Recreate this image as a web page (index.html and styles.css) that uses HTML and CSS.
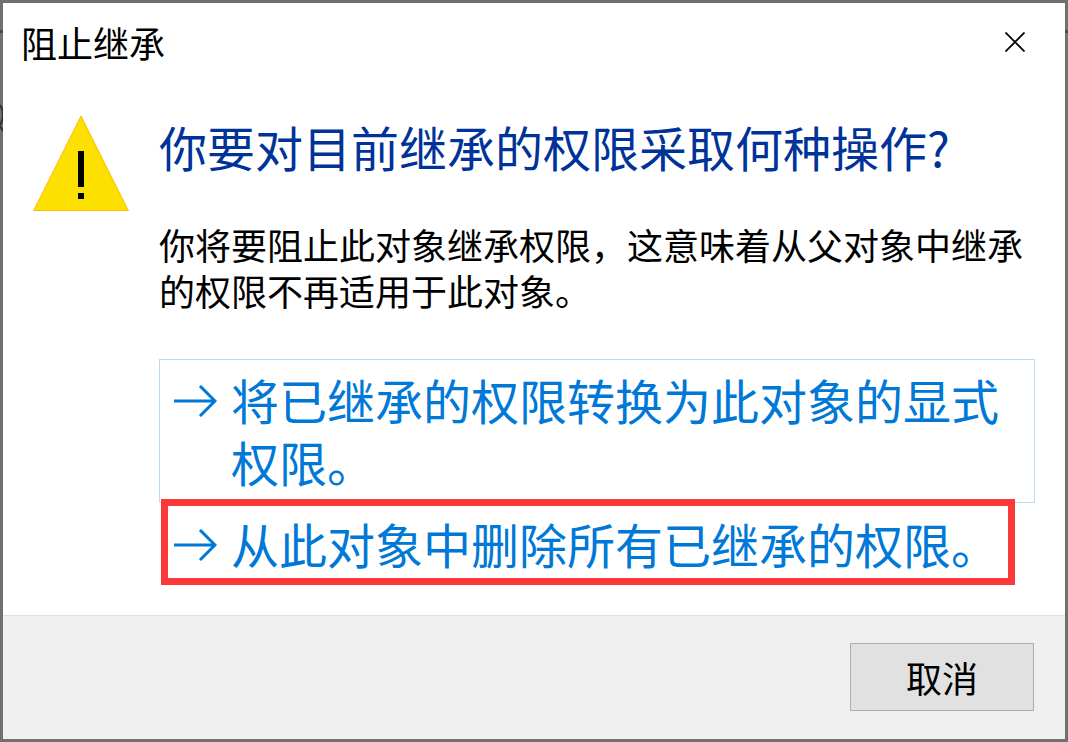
FILE: index.html
```html
<!DOCTYPE html>
<html lang="zh-CN">
<head>
<meta charset="utf-8">
<meta name="viewport" content="width=device-width, initial-scale=1">
<title>阻止继承</title>
<link rel="stylesheet" href="styles.css">
</head>
<body>
<svg class="backdrop backdrop-left" viewBox="0 0 3 140" aria-hidden="true"><path d="M0 31.5H3" stroke="#4b4b4b" stroke-width="3"/><path d="M0 105Q3 109 3 115Q3 121 0 125M0 126L3 131" fill="none" stroke="#303030" stroke-width="2"/></svg>
<svg class="backdrop backdrop-right" viewBox="0 0 3 140" aria-hidden="true"><path d="M0 31.5H3" stroke="#4b4b4b" stroke-width="3"/></svg>
<div class="dialog" role="dialog" aria-labelledby="dialog-title">
  <header class="titlebar">
    <span id="dialog-title">阻止继承</span>
    <button class="close" type="button" aria-label="关闭">
      <svg viewBox="0 0 20 20" aria-hidden="true"><path d="M.5 .5L19.5 19.5M19.5 .5L.5 19.5" stroke="#000" stroke-width="1.8"/></svg>
    </button>
  </header>
  <main class="content">
    <svg class="warning" viewBox="0 0 96 97" role="img" aria-label="警告"><path d="M48 1L95.3 95.5H.7Z" fill="#fce100" stroke="#ffb900"/><path d="M45 36h6v36h-6zM45 78h6v6h-6z"/></svg>
    <div class="message">
      <h1 class="heading">你要对目前继承的权限采取何种操作?</h1>
      <p class="description">你将要阻止此对象继承权限，这意味着从父对象中继承的权限不再适用于此对象。</p>
      <div class="options">
        <button class="option option-default" type="button">
          <svg class="arrow" viewBox="0 0 43 32" aria-hidden="true"><path d="M0 16H41M26 1L41 16L26 31" fill="none" stroke="#0078d7" stroke-width="3"/></svg>
          <span>将已继承的权限转换为此对象的显式权限。</span>
        </button>
        <div class="marked">
          <button class="option" type="button">
            <svg class="arrow" viewBox="0 0 43 32" aria-hidden="true"><path d="M0 16H41M26 1L41 16L26 31" fill="none" stroke="#0078d7" stroke-width="3"/></svg>
            <span>从此对象中删除所有已继承的权限。</span>
          </button>
        </div>
      </div>
    </div>
  </main>
  <footer class="footer">
    <button class="cancel" type="button">取消</button>
  </footer>
</div>
</body>
</html>
```
FILE: styles.css
```css
* {
  box-sizing: border-box;
}

body {
  margin: 0;
  position: relative;
  font-family: "Noto Sans CJK SC", sans-serif;
  font-size: 36px;
  font-weight: 400;
  line-height: 46px;
  color: #000;
}

button {
  font: inherit;
  color: inherit;
  margin: 0;
  padding: 0;
  border: 0;
  background: none;
}

svg {
  display: block;
  flex: none;
}

.backdrop {
  position: absolute;
  z-index: 1;
  top: 0;
  width: 3px;
  height: 140px;
}

.backdrop-left {
  left: 0;
}

.backdrop-right {
  right: 0;
}

.dialog {
  display: flex;
  flex-direction: column;
  min-height: 100vh;
  border: 3px solid #707070;
  background: #fff;
}

.titlebar {
  display: flex;
  align-items: center;
  justify-content: space-between;
  height: 78px;
  padding: 0 30px 0 18px;
}

.close {
  padding: 10px;
}

.close svg {
  width: 20px;
  height: 20px;
}

.content {
  flex: 1;
  display: flex;
  align-items: flex-start;
  gap: 30px;
  padding: 34px 30px 30px;
}

.warning {
  width: 96px;
  height: 97px;
}

.message {
  flex: 1;
}

.heading {
  margin: 0 0 44px;
  font-size: 48px;
  font-weight: 400;
  line-height: 62px;
  color: #003399;
}

.description {
  margin: 0 0 46px;
}

.option {
  display: flex;
  align-items: flex-start;
  gap: 14px;
  width: 100%;
  padding: 8px 14px 10px;
  border: 1px solid transparent;
  font-size: 48px;
  line-height: 62px;
  text-align: left;
  color: #0078d7;
}

.option-default {
  border-color: #bcdcf4;
}

.arrow {
  width: 43px;
  height: 32px;
  margin-top: 17px;
}

.marked {
  position: relative;
}

.marked::after {
  content: "";
  position: absolute;
  inset: -4px 20px 0 2px;
  border: 7px solid #fd3838;
  pointer-events: none;
}

.footer {
  display: flex;
  justify-content: flex-end;
  padding: 27px 31px 28px;
  border-top: 1px solid #dfdfdf;
  background: #f0f0f0;
}

.cancel {
  width: 184px;
  height: 68px;
  border: 1px solid #adadad;
  background: #e1e1e1;
}
```
